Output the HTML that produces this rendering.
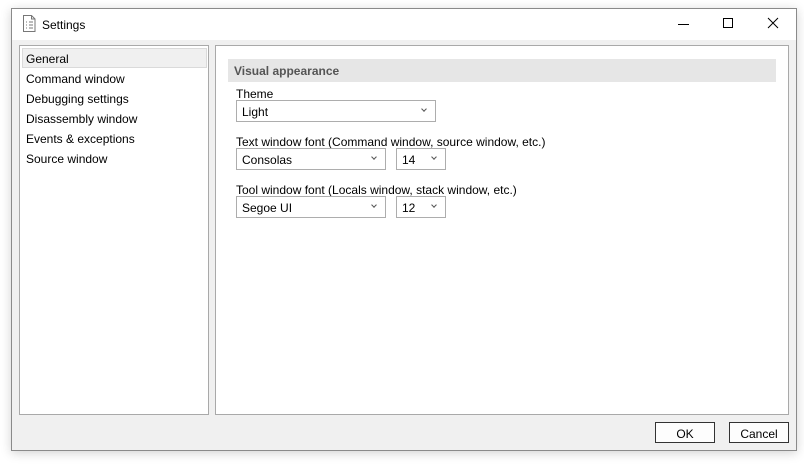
<!DOCTYPE html>
<html><head><style>
*{box-sizing:border-box;margin:0;padding:0}
body{width:804px;height:473px;background:#fff;font-family:"Liberation Sans",sans-serif;font-size:12px;color:#000;position:relative;overflow:hidden}
.win{position:absolute;left:11px;top:8px;width:786px;height:443px;border:1px solid #8a8a8a;background:#f0f0f0;box-shadow:0 2px 10px rgba(0,0,0,.18)}
.title{position:absolute;left:0;top:0;right:0;height:31px;background:#fff}
.a{position:absolute;white-space:nowrap}
.panel{position:absolute;background:#fff;border:1px solid #a9a9a9}
.combo{position:absolute;background:#fff;border:1px solid #adadad;height:22px;padding:4px 0 0 5px}
.combo::after{content:"";position:absolute;right:9px;top:6px;width:3px;height:3px;border-right:1px solid #555;border-bottom:1px solid #555;transform:rotate(45deg)}
.btn{position:absolute;background:#fdfdfd;border:1px solid #333;height:21px;text-align:center;padding-top:4px}
.it{position:absolute;left:26px}
</style></head><body>
<div class="win">
<div class="title">
<svg class="a" style="left:10px;top:6px" width="14" height="17" viewBox="0 0 14 17"><path d="M1.5 .5h8l3.5 3.5v12.5h-11.5z M9.5 .5v3.5h3.5" fill="none" stroke="#777"/><path d="M4 7h1M7 7h4M4 10h1M7 10h4M4 13h1M7 13h4" stroke="#777"/></svg>
<div class="a" style="left:30px;top:9px;font-size:12px">Settings</div>
<div class="a" style="left:666px;top:15px;width:11px;height:1px;background:#000"></div>
<div class="a" style="left:711px;top:9px;width:10px;height:10px;border:1px solid #000"></div>
<svg class="a" style="left:755px;top:8px" width="12" height="12"><path d="M1 1L11 11M11 1L1 11" stroke="#000"/></svg>
</div>
</div>
<div class="panel" style="left:19px;top:45px;width:190px;height:370px"></div>
<div class="a" style="left:22px;top:48px;width:185px;height:20px;background:#f0f0f0;border:1px solid #dadada"></div>
<div class="a it" style="top:52px">General</div>
<div class="a it" style="top:72px">Command window</div>
<div class="a it" style="top:92px">Debugging settings</div>
<div class="a it" style="top:112px">Disassembly window</div>
<div class="a it" style="top:132px">Events &amp; exceptions</div>
<div class="a it" style="top:152px">Source window</div>
<div class="panel" style="left:215px;top:45px;width:574px;height:370px"></div>
<div class="a" style="left:228px;top:59px;width:548px;height:23px;background:#e6e6e6"></div>
<div class="a" style="left:234px;top:64px;font-weight:bold;color:#555">Visual appearance</div>
<div class="a" style="left:236px;top:87px">Theme</div>
<div class="combo" style="left:236px;top:100px;width:200px">Light</div>
<div class="a" style="left:236px;top:135px">Text window font (Command window, source window, etc.)</div>
<div class="combo" style="left:236px;top:148px;width:150px">Consolas</div>
<div class="combo" style="left:396px;top:148px;width:50px">14</div>
<div class="a" style="left:236px;top:183px">Tool window font (Locals window, stack window, etc.)</div>
<div class="combo" style="left:236px;top:196px;width:150px">Segoe UI</div>
<div class="combo" style="left:396px;top:196px;width:50px">12</div>
<div class="btn" style="left:655px;top:422px;width:60px">OK</div>
<div class="btn" style="left:729px;top:422px;width:60px">Cancel</div>
</body></html>
